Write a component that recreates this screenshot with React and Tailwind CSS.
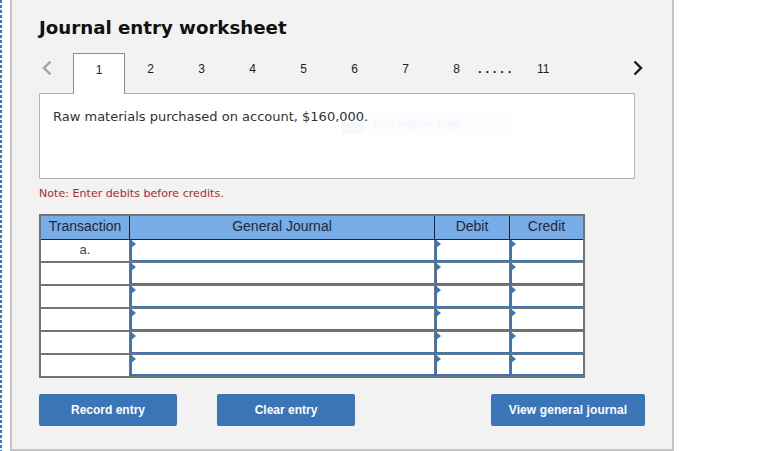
import React from 'react';

const tabs = ['2', '3', '4', '5', '6', '7', '8'];
const rows = ['a.', '', '', '', '', ''];

const Cell = ({ last, end }) => (
  <div className={`relative h-full border-l-2 border-[#3a75b8] bg-white ${last ? 'border-b-2' : 'border-b'}`}>
    <span className="absolute left-[-1px] top-0 border-y-[4px] border-l-[5px] border-y-transparent border-l-[#3a75b8]" />
    {!end && <span className="absolute bottom-0 right-0 top-0 w-px bg-[#737373]" />}
  </div>
);

const App = () => {
  return (
    <div className="h-[451px] w-[765px] overflow-hidden bg-white font-['Liberation_Sans',sans-serif]">
      <div className="flex h-full">
        <div className="w-[2px] bg-[repeating-linear-gradient(to_bottom,#3a75b8_0,#3a75b8_3px,transparent_3px,transparent_5px)]" />
        <div className="ml-[8px] h-[451px] w-[664px] border-x-2 border-b-2 border-[#c4c4c4] bg-[#f2f2f2] pl-[27px]">
          <h1 className="pt-[17px] font-['DejaVu_Sans',sans-serif] text-[18.2px] font-bold leading-[22px] text-[#111]">Journal entry worksheet</h1>

          {/* tabs */}
          <div className="relative mt-[14px] flex h-[40px] w-[606px] items-start">
            <svg width="10" height="16" viewBox="0 0 10 16" className="ml-[3px] mt-[7px]">
              <path d="M8.5 1.5 2 8l6.5 6.5" fill="none" stroke="#a3a3a3" strokeWidth="2.4" />
            </svg>
            <div className="relative z-10 ml-[21px] flex h-[41px] w-[52px] justify-center border-x border-t border-[#8c8c8c] bg-white pt-[8px] text-[12px] leading-[16px] text-[#222]">1</div>
            {tabs.map((t) => (
              <div key={t} className="flex w-[51px] justify-center pt-[8px] text-[12px] leading-[16px] text-[#222]">{t}</div>
            ))}
            <span className="ml-[-4px] w-[34px] pt-[8px] text-[13px] font-bold leading-[16px] tracking-[3.8px] text-[#222]">.....</span>
            <span className="ml-[25px] pt-[8px] text-[12px] leading-[16px] text-[#222]">11</span>
            <svg width="10" height="16" viewBox="0 0 10 16" className="ml-[84px] mt-[7px]">
              <path d="M1.5 1.5 8 8l-6.5 6.5" fill="none" stroke="#1a1a1a" strokeWidth="2.4" />
            </svg>
          </div>

          {/* question */}
          <div className="relative h-[86px] w-[596px] border border-[#b3b3b3] bg-white pl-[13px] pt-[15px] font-['DejaVu_Sans',sans-serif] text-[13px] leading-[16px] text-[#333]">
            {/* faint snip tool ghost left in the screenshot */}
            <div className="absolute left-[301px] top-[18px] flex h-[22px] w-[173px] items-center bg-[#fbfdff] font-['Open_Sans',sans-serif] text-[11px] text-[#f1f4f9]">
              <span className="h-[22px] w-[22px] bg-[#f5f9fe]" />
              <span className="ml-[10px]">Rectangular Snip</span>
            </div>
            <span className="relative">Raw materials purchased on account, $160,000.</span>
          </div>
          <p className="mt-[8px] font-['DejaVu_Sans',sans-serif] text-[11.1px] leading-[14px] text-[#b02a2a]">Note: Enter debits before credits.</p>

          {/* table */}
          <div className="mt-[13px] w-[546px] border-2 border-[#737373] text-[14px] leading-[20px] text-[#1f2937]">
            <div className="grid h-[24px] grid-cols-[89px_305px_75px_1fr] bg-[#78ace6]">
              <div className="flex items-center justify-center border-b border-r border-[#222] pb-[3px]">Transaction</div>
              <div className="flex items-center justify-center border-b border-r border-[#222] pb-[3px]">General Journal</div>
              <div className="flex items-center justify-center border-b border-r border-[#222] pb-[3px]">Debit</div>
              <div className="flex items-center justify-center border-b border-[#222] pb-[3px]">Credit</div>
            </div>
            {rows.map((r, i) => (
              <div key={i} className={`grid grid-cols-[89px_305px_75px_1fr] ${i < 5 ? 'h-[23px] border-b-2 border-[#737373]' : 'h-[21px]'}`}>
                <div className="border-r border-[#737373] bg-white text-center text-[13px] leading-[20px] text-[#444]">{r}</div>
                <Cell last={i === 5} />
                <Cell last={i === 5} />
                <Cell last={i === 5} end />
              </div>
            ))}
          </div>

          {/* buttons */}
          <div className="mt-[16px] flex w-[606px] text-[12px] font-bold leading-[16px] text-white">
            <button className="h-[32px] w-[138px] rounded-[2px] bg-[#3a75b8]">Record entry</button>
            <button className="ml-[40px] h-[32px] w-[138px] rounded-[2px] bg-[#3a75b8]">Clear entry</button>
            <button className="ml-auto h-[32px] w-[154px] rounded-[2px] bg-[#3a75b8] tracking-[0.1px]">View general journal</button>
          </div>
        </div>
      </div>
    </div>
  );
};

export default App;
